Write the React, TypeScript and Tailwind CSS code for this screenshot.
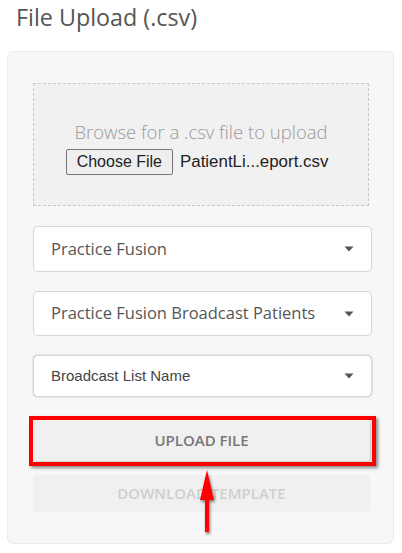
import React from "react";

function Caret() {
  return (
    <svg width="10" height="6" viewBox="0 0 10 6" className="shrink-0">
      <path d="M0.5 0.5 L9.5 0.5 L5 5.5 Z" fill="#555" />
    </svg>
  );
}

function Select({ label, arial, h }: { label: string; arial?: boolean; h: string }) {
  return (
    <div
      className={`flex items-center justify-between bg-white border border-[#d6d6d6] rounded-[5px] pl-[17px] pr-[17px] ${h}`}
    >
      <span
        className={
          arial
            ? "text-[15px] text-[#444] font-['Liberation_Sans',Arial,sans-serif]"
            : "text-[16.5px] text-[#555] font-['Open_Sans',sans-serif]"
        }
      >
        {label}
      </span>
      <Caret />
    </div>
  );
}

export default function App() {
  return (
    <div className="relative w-[402px] h-[553px] bg-white font-['Open_Sans',sans-serif] overflow-hidden">
      <h1 className="pl-[16px] pt-[2px] h-[51px] text-[23.3px] leading-[30px] text-[#555] font-normal">
        File Upload (.csv)
      </h1>
      <div className="ml-[7px] w-[387px] h-[493px] bg-[#f7f7f7] border border-[#ebebeb] rounded-[6px] pt-[31px] pl-[25px] pr-[24px]">
        <div className="h-[123px] border border-dashed border-[#c8c8c8] bg-[#f1f1f1] flex flex-col items-center justify-center pt-[4px]">
          <div className="text-[18.5px] text-[#9a9a9a] font-light leading-[26px]">
            Browse for a .csv file to upload
          </div>
          <div className="flex items-center mt-[4px] mr-[8px] font-['Liberation_Sans',Arial,sans-serif] text-[16px] text-[#222]">
            <div className="h-[26px] px-[10px] flex items-center bg-[#efefef] border border-[#767676] rounded-[2px]">
              Choose File
            </div>
            <span className="ml-[7px] text-[16.9px]">PatientLi...eport.csv</span>
          </div>
        </div>
        <div className="mt-[20px] mr-[-3px] flex flex-col gap-[19px]">
          <Select label="Practice Fusion" h="h-[46px]" />
          <Select label="Practice Fusion Broadcast Patients" h="h-[45px]" />
          <Select label="Broadcast List Name" arial h="h-[42px] shadow-[0_0_2px_rgba(0,0,0,0.25)]" />
        </div>
        <div className="mt-[23px] h-[41px] mr-[-1px] flex items-center justify-center bg-[#f0f0f0] shadow-[1px_1px_3px_rgba(0,0,0,0.25)] rounded-[3px] text-[15px] font-semibold text-[#777]">
          UPLOAD FILE
        </div>
        <div className="mt-[14px] h-[37px] mr-[-1px] flex items-center justify-center bg-[#f0f0f0] rounded-[3px] text-[15px] font-semibold text-[#cfcfcf]">
          DOWNLOAD TEMPLATE
        </div>
      </div>

      {/* annotation: red highlight box */}
      <div className="absolute left-[29px] top-[416px] w-[347px] h-[50px] border-[4px] border-[#ff0000] shadow-[2px_2px_3px_rgba(0,0,0,0.45)]" />

      {/* annotation: arrow */}
      <svg
        className="absolute left-[195px] top-[466px]"
        width="26"
        height="72"
        viewBox="0 0 26 72"
        style={{ filter: "drop-shadow(1px 2px 1.5px rgba(0,0,0,0.5))" }}
      >
        <path d="M12 4 L19 34 L14 34 L14 66 L10 66 L10 34 L5 34 Z" fill="#ff0000" />
      </svg>
    </div>
  );
}
